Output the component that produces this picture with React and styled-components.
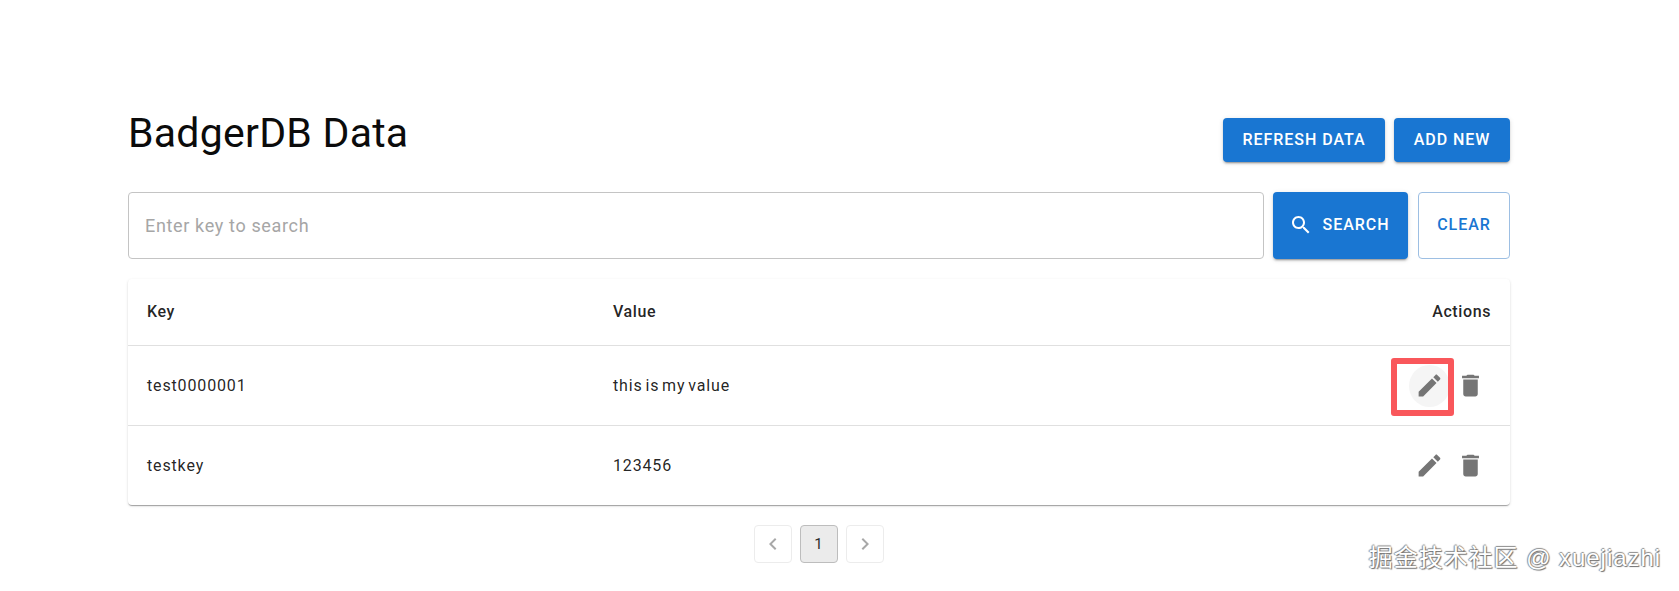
import React from 'react'
import styled, { createGlobalStyle } from 'styled-components'

const GlobalStyle = createGlobalStyle`
  html, body {
    margin: 0;
    background: #fff;
    font-family: Roboto, "Noto Sans CJK SC", sans-serif;
  }
`

const Page = styled.div`
  position: relative;
  box-sizing: border-box;
  width: 1679px;
  height: 591px;
  padding: 118px 169px 0 128px;
  overflow: hidden;
`

const Header = styled.header`
  display: flex;
  justify-content: space-between;
  align-items: flex-start;
  height: 74px;
`

const Title = styled.h1`
  margin: -9px 0 0;
  font-size: 41px;
  line-height: 48px;
  font-weight: 400;
  letter-spacing: 0.25px;
  color: #0b0b0b;
`

const ButtonRow = styled.div`
  display: flex;
  gap: 9px;
`

const Button = styled.button`
  display: inline-flex;
  align-items: center;
  justify-content: center;
  box-sizing: border-box;
  width: ${p => p.$width}px;
  height: ${p => p.$height}px;
  padding: 0 0 2px;
  border: ${p => (p.$outlined ? '1px solid #9dbfe3' : 'none')};
  border-radius: 4px;
  background: ${p => (p.$outlined ? '#fff' : '#1976d2')};
  color: ${p => (p.$outlined ? '#1976d2' : '#fff')};
  box-shadow: ${p => (p.$outlined
    ? 'none'
    : '0 3px 1px -2px rgba(0,0,0,.2), 0 2px 2px 0 rgba(0,0,0,.14), 0 1px 5px 0 rgba(0,0,0,.12)')};
  font-family: inherit;
  font-size: 16px;
  font-weight: 500;
  letter-spacing: 0.95px;
  text-transform: uppercase;
`

const SearchRow = styled.div`
  display: flex;
  align-items: flex-start;
  height: 87px;
`

const SearchInput = styled.input`
  box-sizing: border-box;
  flex: none;
  width: 1136px;
  height: 67px;
  margin-right: 9px;
  padding: 0 16px;
  border: 1px solid #c4c4c4;
  border-radius: 4px;
  font-family: inherit;
  font-size: 18px;
  letter-spacing: 0.65px;
  outline: none;

  &::placeholder {
    color: #a6a6a6;
    opacity: 1;
  }
`

const SearchIcon = styled.svg`
  width: 24px;
  height: 24px;
  margin: 0 10px 0 -3px;
  fill: currentColor;
`

const ClearButton = styled(Button)`
  margin-left: 10px;
`

const Card = styled.div`
  border-radius: 4px;
  background: #fff;
  box-shadow: 0 2px 1px -1px rgba(0,0,0,.2), 0 1px 1px 0 rgba(0,0,0,.14), 0 1px 3px 0 rgba(0,0,0,.12);
`

const Table = styled.table`
  width: 100%;
  border-collapse: collapse;
  table-layout: fixed;
  font-size: 16px;
  color: rgba(0,0,0,.87);
`

const HeadCell = styled.th`
  height: 65px;
  padding: 0 19px 1px;
  width: ${p => p.$width || 'auto'};
  text-align: ${p => p.$align || 'left'};
  font-weight: 500;
  letter-spacing: 0.6px;
  border-bottom: 1px solid #e0e0e0;
`

const BodyRow = styled.tr`
  &:last-child td {
    border-bottom: none;
  }
`

const Cell = styled.td`
  height: 79px;
  padding: 0 19px;
  text-align: ${p => p.$align || 'left'};
  letter-spacing: 0.85px;
  word-spacing: -2px;
  border-bottom: 1px solid #e0e0e0;
`

const Actions = styled.div`
  display: flex;
  justify-content: flex-end;
`

const IconButton = styled.button`
  position: relative;
  display: flex;
  align-items: center;
  justify-content: center;
  width: 41px;
  height: 42px;
  padding: 0;
  border: none;
  border-radius: 50%;
  background: ${p => (p.$hover ? '#f5f5f5' : 'transparent')};
  color: #757575;
`

const ActionIcon = styled.svg`
  flex: none;
  width: 29px;
  height: 29px;
  fill: currentColor;
`

const Highlight = styled.span`
  position: absolute;
  top: -7px;
  left: -18px;
  box-sizing: border-box;
  width: 63px;
  height: 58px;
  border: 6px solid #f9575b;
  border-radius: 3px;
`

const Pagination = styled.nav`
  display: flex;
  justify-content: center;
  gap: 8px;
  margin: 20px 1px 0 0;
`

const PageItem = styled.button`
  display: flex;
  align-items: center;
  justify-content: center;
  box-sizing: border-box;
  width: 38px;
  height: 38px;
  padding: 0;
  border: 1px solid ${p => (p.$active ? '#bdbdbd' : '#ececec')};
  border-radius: 4px;
  background: ${p => (p.$active ? '#ebebeb' : '#fff')};
  color: ${p => (p.$active ? '#2b2b2b' : '#a8a8a8')};
  font-family: inherit;
  font-size: 15px;
`

const Chevron = styled.svg`
  width: 24px;
  height: 24px;
  fill: currentColor;
`

const Watermark = styled.div`
  position: absolute;
  right: 18px;
  bottom: 19px;
  color: #fff;
  font-family: "Liberation Sans", "Noto Sans CJK SC", sans-serif;
  font-size: 24px;
  line-height: 28px;
  letter-spacing: 0.95px;
  white-space: nowrap;
  text-shadow: 1px 1px 1px #6e6e6e, -1px 0 1px #8c8c8c, 0 -1px 1px #8c8c8c;
`

const EDIT_PATH = 'M3 17.25V21h3.75L17.81 9.94l-3.75-3.75L3 17.25zM20.71 7.04c.39-.39.39-1.02 0-1.41l-2.34-2.34c-.39-.39-1.02-.39-1.41 0l-1.83 1.83 3.75 3.75 1.83-1.83z'
const DELETE_PATH = 'M6 19c0 1.1.9 2 2 2h8c1.1 0 2-.9 2-2V7H6v12zM19 4h-3.5l-1-1h-5l-1 1H5v2h14V4z'

const rows = [
  { key: 'test0000001', value: 'this is my value', marked: true },
  { key: 'testkey', value: '123456' },
]

const App = () => (
  <Page>
    <GlobalStyle />
    <Header>
      <Title>BadgerDB Data</Title>
      <ButtonRow>
        <Button $width={162} $height={44}>Refresh Data</Button>
        <Button $width={116} $height={44}>Add New</Button>
      </ButtonRow>
    </Header>
    <SearchRow>
      <SearchInput placeholder='Enter key to search' />
      <Button $width={135} $height={67}>
        <SearchIcon viewBox='0 0 24 24'>
          <path d='M15.5 14h-.79l-.28-.27C15.41 12.59 16 11.11 16 9.5 16 5.91 13.09 3 9.5 3S3 5.91 3 9.5 5.91 16 9.5 16c1.61 0 3.09-.59 4.23-1.57l.27.28v.79l5 4.99L20.49 19l-4.99-5zm-6 0C7.01 14 5 11.99 5 9.5S7.01 5 9.5 5 14 7.01 14 9.5 11.99 14 9.5 14z' />
        </SearchIcon>
        Search
      </Button>
      <ClearButton $outlined $width={92} $height={67}>Clear</ClearButton>
    </SearchRow>
    <Card>
      <Table>
        <thead>
          <tr>
            <HeadCell $width='428px'>Key</HeadCell>
            <HeadCell $width='428px'>Value</HeadCell>
            <HeadCell $align='right'>Actions</HeadCell>
          </tr>
        </thead>
        <tbody>
          {rows.map(row => (
            <BodyRow key={row.key}>
              <Cell>{row.key}</Cell>
              <Cell>{row.value}</Cell>
              <Cell $align='right'>
                <Actions>
                  <IconButton $hover={row.marked} aria-label='edit'>
                    <ActionIcon viewBox='0 0 24 24'><path d={EDIT_PATH} /></ActionIcon>
                    {row.marked && <Highlight />}
                  </IconButton>
                  <IconButton aria-label='delete'>
                    <ActionIcon viewBox='0 0 24 24'><path d={DELETE_PATH} /></ActionIcon>
                  </IconButton>
                </Actions>
              </Cell>
            </BodyRow>
          ))}
        </tbody>
      </Table>
    </Card>
    <Pagination>
      <PageItem aria-label='previous'>
        <Chevron viewBox='0 0 24 24'><path d='M15.41 7.41 14 6l-6 6 6 6 1.41-1.41L10.83 12z' /></Chevron>
      </PageItem>
      <PageItem $active>1</PageItem>
      <PageItem aria-label='next'>
        <Chevron viewBox='0 0 24 24'><path d='M10 6 8.59 7.41 13.17 12l-4.58 4.59L10 18l6-6z' /></Chevron>
      </PageItem>
    </Pagination>
    <Watermark>掘金技术社区 @ xuejiazhi</Watermark>
  </Page>
)

export default App
